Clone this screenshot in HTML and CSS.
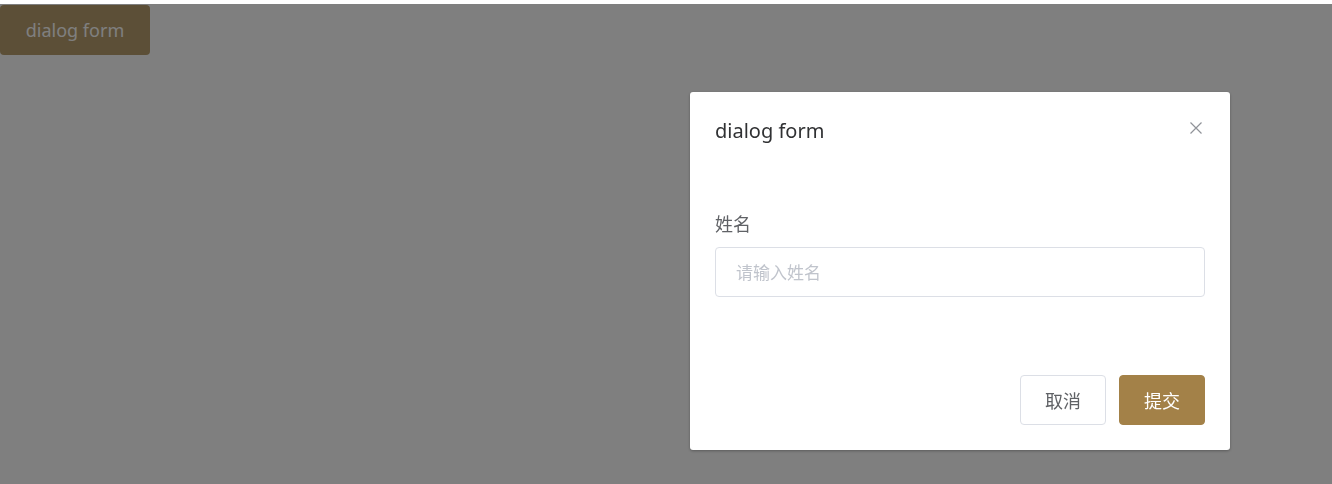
FILE: index.html
```html
<!DOCTYPE html>
<html lang="zh-CN">
<head>
    <meta charset="UTF-8">
    <meta name="viewport" content="width=device-width, initial-scale=1.0">
    <title>dialog form</title>
    <link rel="stylesheet" href="styles.css">
</head>
<body>
    <!-- Кнопка открытия -->
    <div class="page">
        <button class="open-btn">dialog form</button>
    </div>

    <!-- Маска -->
    <div class="mask"></div>

    <!-- Диалог -->
    <div class="dialog">
        <div class="dialog-header">
            <span class="dialog-title">dialog form</span>
            <span class="dialog-close">
                <svg width="12" height="12" viewBox="0 0 12 12">
                    <path d="M0.5 0.5 L11.5 11.5 M11.5 0.5 L0.5 11.5" stroke="#909399" stroke-width="1.2" fill="none"/>
                </svg>
            </span>
        </div>
        <div class="dialog-body">
            <label class="form-label">姓名</label>
            <input class="form-input" type="text" placeholder="请输入姓名">
        </div>
        <div class="dialog-footer">
            <button class="btn btn-cancel">取消</button>
            <button class="btn btn-submit">提交</button>
        </div>
    </div>
</body>
</html>
```

FILE: styles.css
```css
body {
    margin: 0;
    padding: 0;
    height: 100vh;
    font-family: 'Noto Sans', 'Noto Sans CJK SC', sans-serif;
    background: #ffffff;
    overflow: hidden;
}

.page {
    padding-top: 5px;
}

.open-btn {
    display: block;
    width: 150px;
    height: 50px;
    padding: 0;
    font-family: inherit;
    font-size: 18px;
    color: #ffffff;
    background-color: #b89e6e;
    border: none;
    border-radius: 4px;
}

/* Маска */
.mask {
    position: fixed;
    top: 4px;
    left: 0;
    right: 0;
    bottom: 0;
    background-color: rgba(0, 0, 0, 0.5);
    z-index: 10;
}

/* Диалог */
.dialog {
    position: fixed;
    top: 92px;
    left: 690px;
    width: 540px;
    background: #ffffff;
    border-radius: 3px;
    box-shadow: 0 1px 3px rgba(0, 0, 0, 0.3);
    z-index: 11;
    box-sizing: border-box;
}

.dialog-header {
    position: relative;
    padding: 27px 25px 0;
}

.dialog-title {
    display: block;
    font-size: 20px;
    line-height: 24px;
    color: #303133;
}

.dialog-close {
    position: absolute;
    top: 30px;
    right: 28px;
    width: 12px;
    height: 12px;
    line-height: 0;
}

.dialog-body {
    display: flex;
    flex-direction: column;
    padding: 69px 25px 0;
}

.form-label {
    font-size: 18px;
    line-height: 24px;
    color: #606266;
    margin-bottom: 11px;
}

.form-input {
    height: 50px;
    padding: 0 20px;
    font-family: inherit;
    font-size: 17px;
    color: #606266;
    border: 1px solid #dcdfe6;
    border-radius: 4px;
    box-sizing: border-box;
    outline: none;
}

.form-input::placeholder {
    color: #c0c4cc;
}

.dialog-footer {
    display: flex;
    justify-content: flex-end;
    gap: 13px;
    padding: 78px 25px 25px;
}

.btn {
    width: 86px;
    height: 50px;
    padding: 0;
    font-family: inherit;
    font-size: 18px;
    border-radius: 4px;
    box-sizing: border-box;
}

.btn-cancel {
    color: #606266;
    background: #ffffff;
    border: 1px solid #dcdfe6;
}

.btn-submit {
    color: #ffffff;
    background: #a38148;
    border: 1px solid #a38148;
}
```
